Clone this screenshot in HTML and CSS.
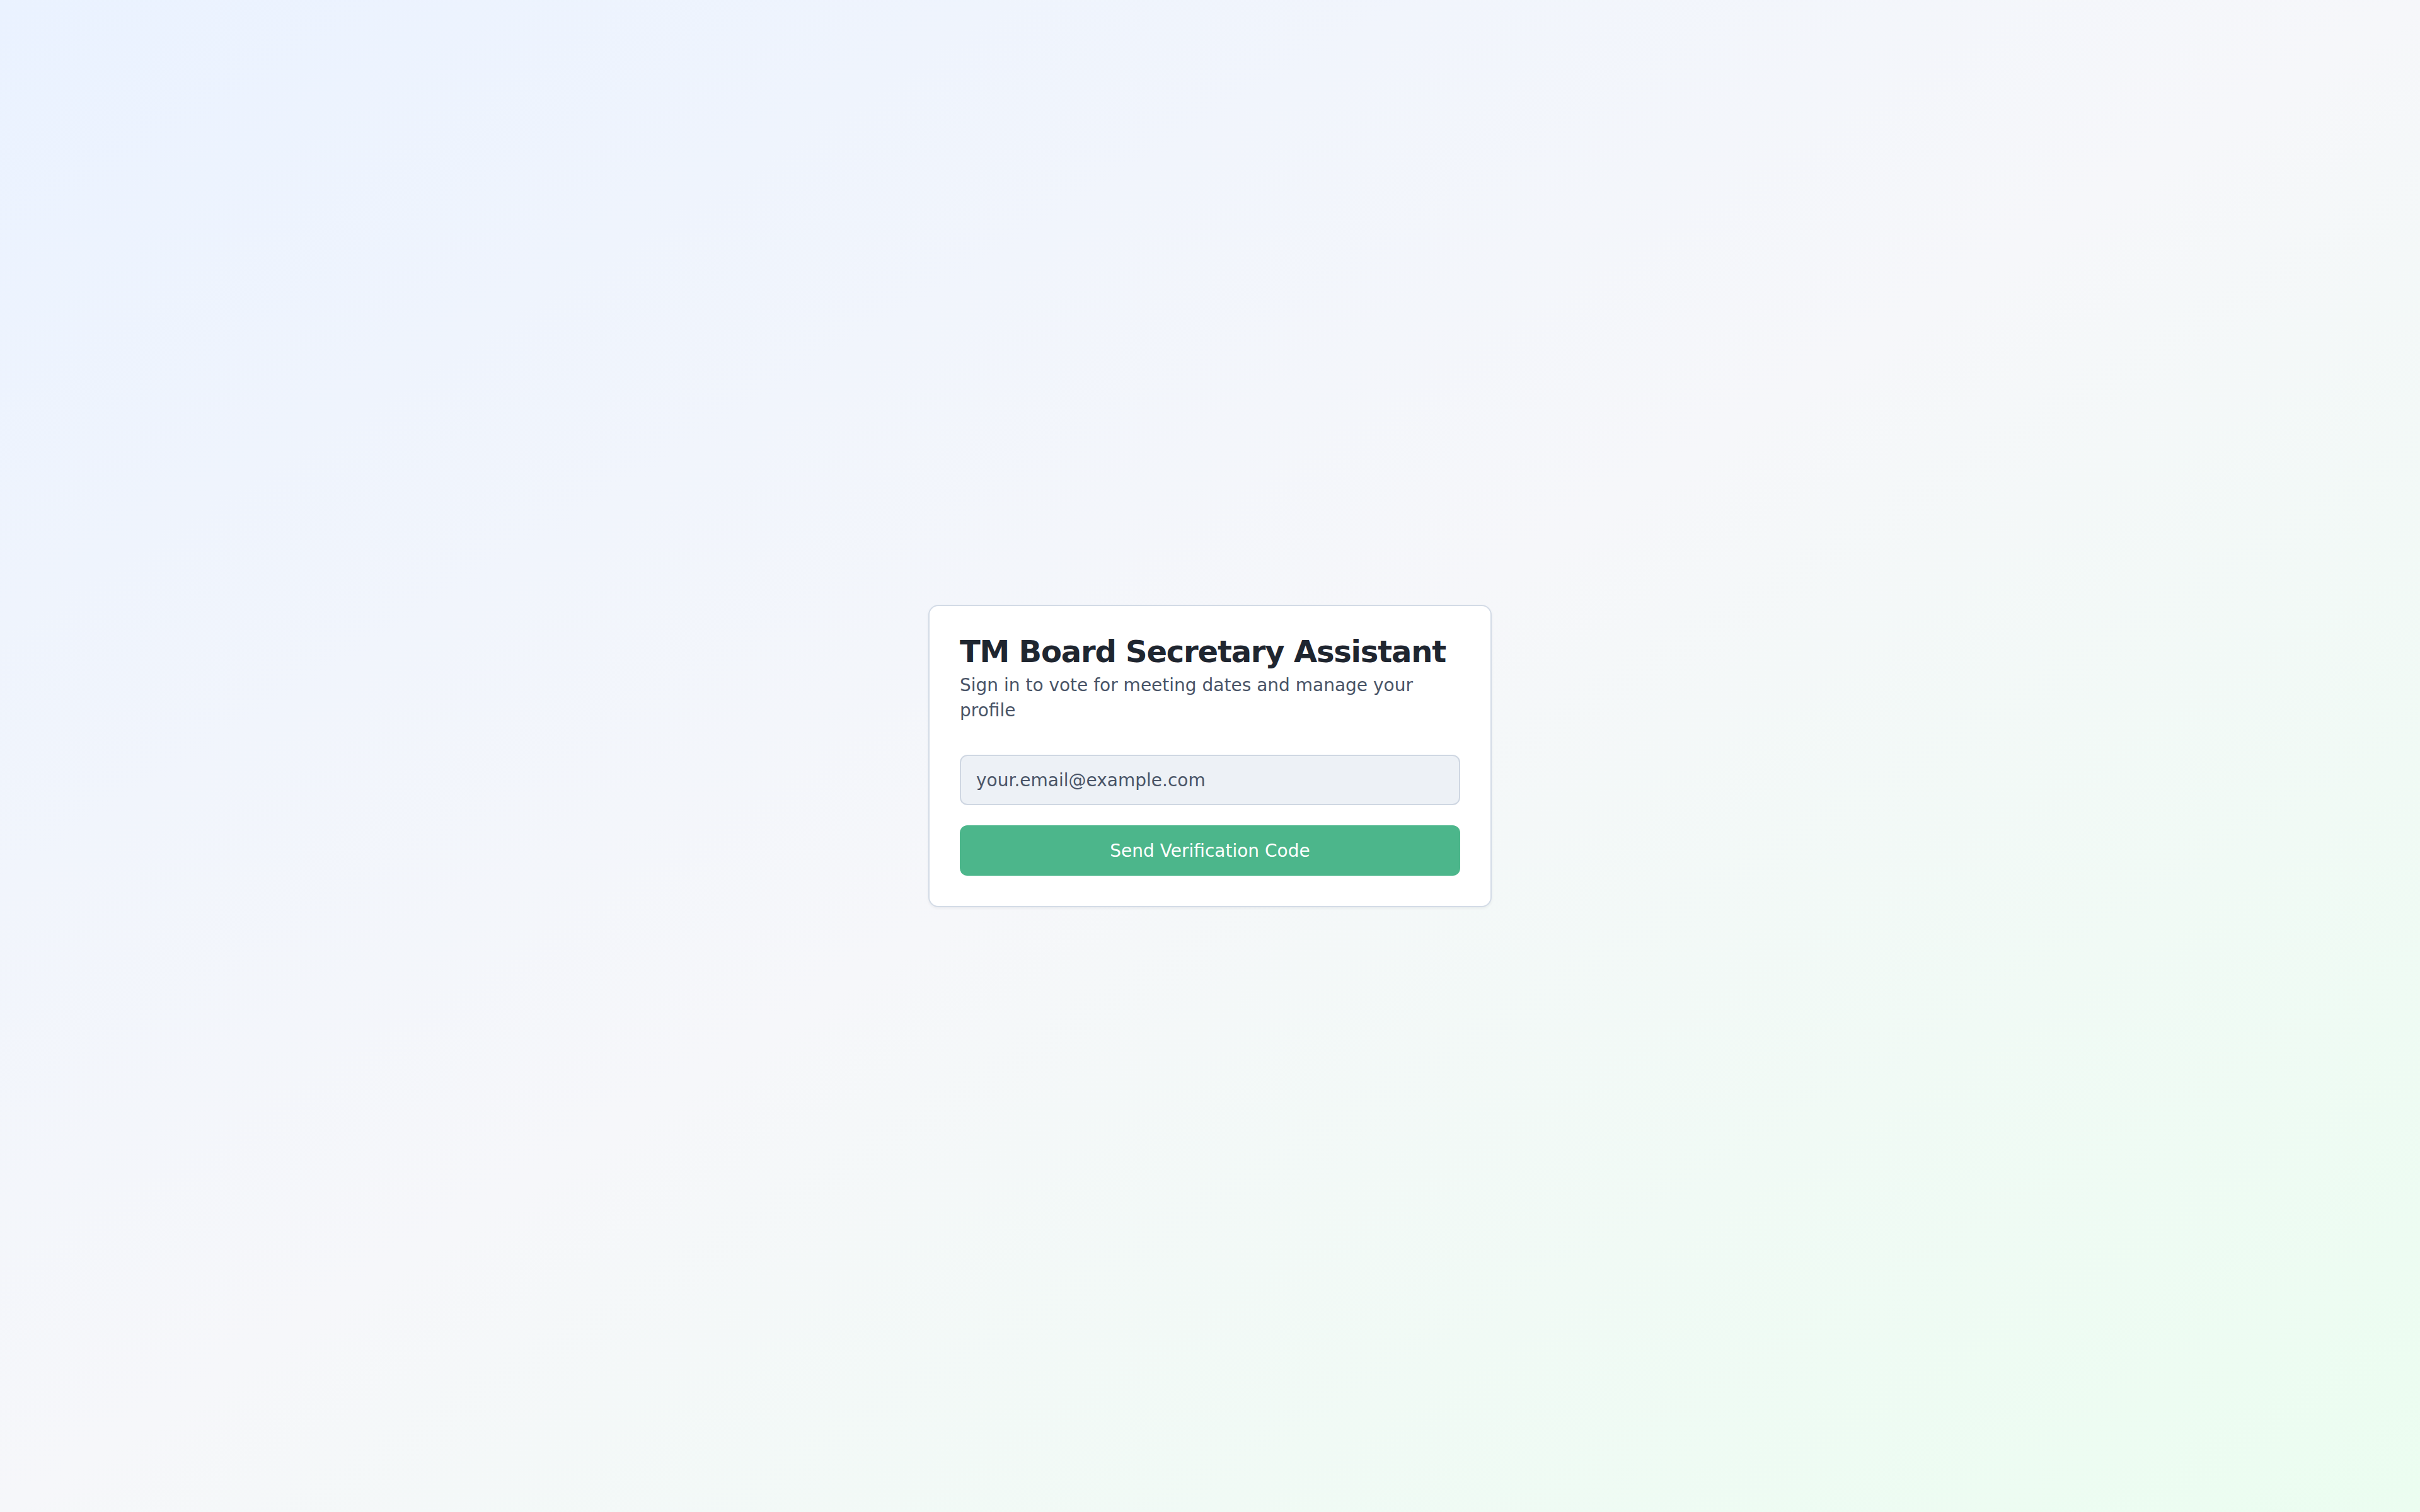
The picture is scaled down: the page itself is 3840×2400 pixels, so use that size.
FILE: index.html
```html
<!DOCTYPE html>
<html lang="en">
  <head>
    <meta charset="UTF-8" />
    <meta name="viewport" content="width=device-width, initial-scale=1.0" />
    <title>TM Board Secretary Assistant</title>
    <link rel="stylesheet" href="styles.css">
  </head>
  <body>
    <div class="page">
      <div class="login-card">
        <h1 class="login-title">TM Board Secretary Assistant</h1>
        <p class="login-subtitle">Sign in to vote for meeting dates and manage your profile</p>
        <form class="login-form">
          <input type="email" class="login-input" placeholder="your.email@example.com" />
          <button type="submit" class="login-button">Send Verification Code</button>
        </form>
      </div>
    </div>
  </body>
</html>
```

FILE: styles.css
```css
html,
body {
  margin: 0;
  height: 100%;
}
body {
  font-family: "DejaVu Sans", "Liberation Sans", sans-serif;
  background: linear-gradient(to bottom right, #eaf2ff 0%, #f6f7fa 50%, #ebfdf0 100%);
}
.page {
  min-height: 100%;
  display: flex;
  align-items: center;
  justify-content: center;
}
.login-card {
  box-sizing: border-box;
  width: 894px;
  padding: 40px 48px 48px;
  background-color: #fff;
  border: 2px solid #d3dbe6;
  border-radius: 16px;
  box-shadow: 0 2px 4px rgba(30, 41, 59, 0.06);
}
.login-title {
  margin: 0;
  font-size: 48px;
  line-height: 64px;
  font-weight: 700;
  letter-spacing: -1.2px;
  white-space: nowrap;
  color: #1f2630;
}
.login-subtitle {
  margin: 2px 0 50px;
  font-size: 28px;
  line-height: 40px;
  color: #4a5568;
}
.login-form {
  display: flex;
  flex-direction: column;
  gap: 32px;
}
.login-input {
  box-sizing: border-box;
  height: 80px;
  padding: 0 24px;
  font-family: inherit;
  font-size: 28px;
  color: #1f2630;
  background-color: #edf1f6;
  border: 2px solid #cfd7e2;
  border-radius: 12px;
  outline: none;
}
.login-input::placeholder {
  color: #4a5568;
}
.login-button {
  height: 80px;
  font-family: inherit;
  font-size: 28px;
  color: #fff;
  background-color: #4cb68b;
  border: none;
  border-radius: 12px;
  cursor: pointer;
}
```
